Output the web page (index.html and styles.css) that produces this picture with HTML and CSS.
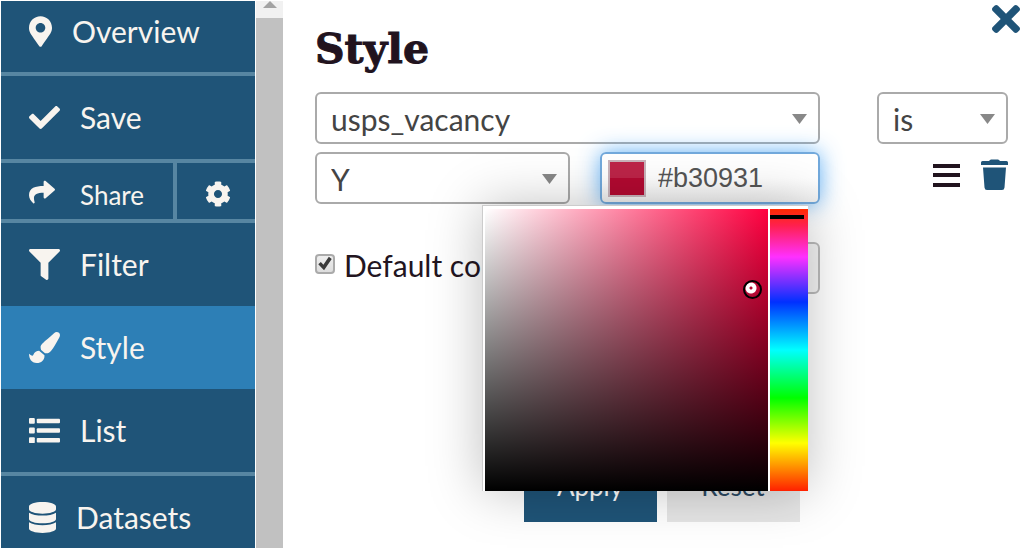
FILE: index.html
```html
<!DOCTYPE html>
<html lang="en">
<head>
<meta charset="utf-8">
<meta name="viewport" content="width=device-width, initial-scale=1">
<title>Style</title>
<link rel="stylesheet" href="styles.css">
</head>
<body>
<div class="app">
  <nav class="sidebar">
    <a class="nav-item first ruled" href="#overview">
      <svg class="icon icon-pin" viewBox="0 0 384 512"><path d="M172.268 501.67C26.97 291.031 0 269.413 0 192 0 85.961 85.961 0 192 0s192 85.961 192 192c0 77.413-26.97 99.031-172.268 309.67-9.535 13.774-29.93 13.773-39.464 0zM192 272c44.183 0 80-35.817 80-80s-35.817-80-80-80-80 35.817-80 80 35.817 80 80 80z"/></svg>
      <span>Overview</span>
    </a>
    <a class="nav-item ruled" href="#save">
      <svg class="icon" viewBox="0 0 512 512"><path d="M173.898 439.404l-166.4-166.4c-9.997-9.997-9.997-26.206 0-36.204l36.203-36.204c9.997-9.998 26.207-9.998 36.204 0L192 312.69 432.095 72.596c9.997-9.997 26.207-9.997 36.204 0l36.203 36.204c9.997 9.997 9.997 26.206 0 36.204l-294.4 294.401c-9.998 9.997-26.207 9.997-36.204-.001z"/></svg>
      <span>Save</span>
    </a>
    <div class="share-row ruled">
      <a class="share" href="#share">
        <svg class="icon-small" viewBox="0 0 512 512"><path d="M503.691 189.836L327.687 37.851C312.281 24.546 288 35.347 288 56.015v80.053C127.371 137.907 0 170.1 0 322.326c0 61.441 39.581 122.309 83.333 154.132 13.653 9.931 33.111-2.533 28.077-18.631C66.066 312.814 132.917 274.316 288 272.085V360c0 20.7 24.3 31.453 39.687 18.164l176.004-152c11.071-9.562 11.086-26.753 0-36.328z"/></svg>
        <span>Share</span>
      </a>
      <button class="settings" type="button" aria-label="Share settings">
        <svg class="icon-small" viewBox="0 0 512 512"><path d="M487.4 315.7l-42.6-24.6c4.3-23.2 4.3-47 0-70.2l42.6-24.6c4.9-2.8 7.1-8.6 5.5-14-11.1-35.6-30-67.8-54.7-94.6-3.8-4.1-10-5.1-14.8-2.3L380.8 110c-17.9-15.4-38.5-27.3-60.8-35.1V25.8c0-5.6-3.9-10.5-9.4-11.7-36.7-8.2-74.3-7.8-109.2 0-5.5 1.2-9.4 6.1-9.4 11.7V75c-22.2 7.9-42.8 19.8-60.8 35.1L88.7 85.5c-4.9-2.8-11-1.9-14.8 2.3-24.7 26.7-43.6 58.9-54.7 94.6-1.7 5.4.6 11.2 5.5 14L67.3 221c-4.3 23.2-4.3 47 0 70.2l-42.6 24.6c-4.9 2.8-7.1 8.6-5.5 14 11.1 35.6 30 67.8 54.7 94.6 3.8 4.1 10 5.1 14.8 2.3l42.6-24.6c17.9 15.4 38.5 27.3 60.8 35.1v49.2c0 5.6 3.9 10.5 9.4 11.7 36.7 8.2 74.3 7.8 109.2 0 5.5-1.2 9.4-6.1 9.4-11.7v-49.2c22.2-7.9 42.8-19.8 60.8-35.1l42.6 24.6c4.9 2.8 11 1.9 14.8-2.3 24.7-26.7 43.6-58.9 54.7-94.6 1.5-5.5-.7-11.3-5.6-14.1zM256 336c-44.1 0-80-35.9-80-80s35.9-80 80-80 80 35.9 80 80-35.9 80-80 80z"/></svg>
      </button>
    </div>
    <a class="nav-item" href="#filter">
      <svg class="icon" viewBox="0 0 512 512"><path d="M487.976 0H24.028C2.71 0-8.047 25.866 7.058 40.971L192 225.941V432c0 7.831 3.821 15.17 10.237 19.662l80 55.98C298.02 518.69 320 507.493 320 487.98V225.941l184.947-184.97C520.021 25.896 509.338 0 487.976 0z"/></svg>
      <span>Filter</span>
    </a>
    <a class="nav-item active" href="#style">
      <svg class="icon" viewBox="0 0 512 512"><path d="M167.02 309.34c-40.12 2.58-76.53 17.86-97.19 72.3-2.35 6.21-8 9.98-14.59 9.98-11.11 0-45.46-27.67-55.25-34.35C0 439.62 37.93 512 128 512c75.86 0 128-43.77 128-120.19 0-3.11-.65-6.08-.97-9.13l-88.01-73.34zM457.89 0c-15.16 0-29.37 6.71-40.21 16.45C213.27 199.05 192 203.34 192 257.09c0 13.7 3.25 26.76 8.73 38.7l63.82 53.18c7.21 1.8 14.64 3.03 22.39 3.03 62.11 0 98.11-45.47 211.16-256.46 7.38-14.35 13.9-29.85 13.9-45.99C512 20.64 486 0 457.89 0z"/></svg>
      <span>Style</span>
    </a>
    <a class="nav-item ruled" href="#list">
      <svg class="icon" viewBox="0 0 512 512"><rect x="0" y="48" width="96" height="96" rx="16"/><rect x="0" y="208" width="96" height="96" rx="16"/><rect x="0" y="368" width="96" height="96" rx="16"/><rect x="128" y="60" width="384" height="76" rx="16"/><rect x="128" y="218" width="384" height="76" rx="16"/><rect x="128" y="378" width="384" height="76" rx="16"/></svg>
      <span>List</span>
    </a>
    <a class="nav-item" href="#datasets">
      <svg class="icon icon-data" viewBox="0 0 448 512"><path d="M448 73.143v45.714C448 159.143 347.667 192 224 192S0 159.143 0 118.857V73.143C0 32.857 100.333 0 224 0s224 32.857 224 73.143zM448 176v102.857C448 319.143 347.667 352 224 352S0 319.143 0 278.857V176c48.125 33.143 136.208 48.572 224 48.572S399.874 209.143 448 176zm0 160v102.857C448 479.143 347.667 512 224 512S0 479.143 0 438.857V336c48.125 33.143 136.208 48.572 224 48.572S399.874 369.143 448 336z"/></svg>
      <span>Datasets</span>
    </a>
  </nav>
  <div class="scrollbar" aria-hidden="true">
    <div class="scroll-up"><svg class="scroll-arrow" viewBox="0 0 14 7"><path d="M0 7L7 0l7 7z"/></svg></div>
    <div class="scroll-thumb"></div>
  </div>
  <main class="panel">
    <button class="close" type="button" aria-label="Close">
      <svg class="close-icon" viewBox="0 80 352 352"><path d="M242.72 256l100.07-100.07c12.28-12.28 12.28-32.19 0-44.48l-22.24-22.24c-12.28-12.28-32.19-12.28-44.48 0L176 189.28 75.93 89.21c-12.28-12.28-32.19-12.28-44.48 0L9.21 111.45c-12.28 12.28-12.28 32.19 0 44.48L109.28 256 9.21 356.07c-12.28 12.28-12.28 32.19 0 44.48l22.24 22.24c12.28 12.28 32.2 12.28 44.48 0L176 322.72l100.07 100.07c12.28 12.28 32.2 12.28 44.48 0l22.24-22.24c12.28-12.28 12.28-32.19 0-44.48L242.72 256z"/></svg>
    </button>
    <h1 class="title">Style</h1>
    <form class="rules">
      <div class="select-box">
        <select class="field" aria-label="Column"><option>usps_vacancy</option></select>
        <svg class="caret" viewBox="0 0 15 10"><path d="M0 0h15L7.500 10z"/></svg>
      </div>
      <div class="select-box">
        <select class="field" aria-label="Operator"><option>is</option></select>
        <svg class="caret" viewBox="0 0 15 10"><path d="M0 0h15L7.500 10z"/></svg>
      </div>
      <div class="value-row">
        <div class="select-box">
          <select class="field" aria-label="Value"><option>Y</option></select>
          <svg class="caret" viewBox="0 0 15 10"><path d="M0 0h15L7.500 10z"/></svg>
        </div>
        <div class="color-box focused">
          <span class="swatch"></span>
          <input class="color-text" type="text" value="#b30931" aria-label="Color">
          <div class="picker">
            <div class="shade"><span class="handle"></span></div>
            <input class="hue" type="range" min="0" max="100" value="2" aria-label="Hue">
          </div>
        </div>
      </div>
      <div class="row-tools">
        <button class="tool" type="button" aria-label="Reorder"><svg class="tool-icon" viewBox="0 0 27 32"><path class="ink" d="M0 5h27v4H0zM0 14h27v4H0zM0 24h27v4H0z"/></svg></button>
        <button class="tool" type="button" aria-label="Delete"><svg class="tool-icon" viewBox="0 0 27 32"><path d="M1.500 2H8q1-1.500 2-1.500h7q1 0 2 1.500h6.500Q27 2 27 3.500V6H0V3.500Q0 2 1.500 2zM2 8.500h23l-1.500 20Q23.300 31 21 31H6Q3.700 31 3.500 28.500z"/></svg></button>
      </div>
      <div class="default-row">
        <label class="check"><input class="check-input" type="checkbox" checked>Default color</label>
        <div class="color-box muted"><input class="color-text" type="text" aria-label="Default color value"></div>
      </div>
    </form>
    <div class="actions">
      <button class="btn primary" type="button">Apply</button>
      <button class="btn" type="button">Reset</button>
    </div>
  </main>
</div>
</body>
</html>
```
FILE: styles.css
```css
* { box-sizing: border-box; }
body {
  margin: 0;
  background: #fff;
  color: #23151f;
  font-family: Lato, "Open Sans", sans-serif;
  font-size: 30px;
}
button { font: inherit; border: 0; padding: 0; background: none; cursor: pointer; }
svg { display: block; flex: none; fill: currentColor; }

.app { display: flex; height: 100vh; padding: 1px 0 1px 1px; overflow: hidden; }

.sidebar { flex: 0 0 254px; background: #1f5478; color: #f8f4ef; overflow: hidden; }
.nav-item {
  display: flex;
  align-items: center;
  gap: 20px;
  height: 83px;
  padding: 0 0 1px 28px;
  color: inherit;
  text-decoration: none;
}
.ruled { box-sizing: content-box; border-bottom: 4px solid #5786a2; }
.nav-item.ruled { height: 82px; }
.nav-item.first { height: 60px; padding-bottom: 11px; }
.active { background: #2d7fb6; }
.icon { width: 31px; height: 31px; }
.icon-pin { width: 23px; }
.icon-data { width: 27px; }
.icon-small { width: 26px; height: 26px; }
.share-row { display: flex; height: 56px; font-size: 26px; line-height: 31px; }
.share {
  flex: 1;
  display: flex;
  align-items: baseline;
  gap: 25px;
  padding: 16px 0 0 28px;
  color: inherit;
  text-decoration: none;
}
.settings {
  flex: 0 0 82px;
  display: grid;
  place-items: center;
  padding: 6px 0 0 4px;
  border-left: 4px solid #5786a2;
  color: inherit;
}

.scrollbar { flex: 0 0 28px; display: flex; flex-direction: column; padding-left: 1px; }
.scroll-up { height: 17px; background: #f1f1f1; color: #a3a3a3; }
.scroll-arrow { width: 14px; height: 7px; margin: 0 auto; }
.scroll-thumb { flex: 1; background: #c1c1c1; }

.panel { position: relative; flex: 1; min-width: 0; padding: 20px 27px 0 32px; }
.close { position: absolute; top: 4px; right: 15px; color: #1f5478; }
.close-icon { width: 28px; height: 28px; }
.title {
  margin: 0 0 15px;
  font: bold 41px/56px "DejaVu Serif", serif;
  color: #21131e;
  -webkit-text-stroke: 1px #21131e;
}

.rules { display: grid; grid-template-columns: 505fr 131fr; gap: 8px 57px; }
.select-box { position: relative; min-width: 0; }
.field {
  display: block;
  width: 100%;
  height: 52px;
  padding: 2px 40px 0 14px;
  border: 2px solid #aaa;
  border-radius: 6px;
  background: #fff;
  color: #444;
  font: inherit;
  line-height: 36px;
  appearance: none;
}
.caret {
  position: absolute;
  right: 13px;
  top: 22px;
  width: 15px;
  height: 10px;
  color: #888;
  pointer-events: none;
}
.value-row { display: grid; grid-template-columns: 255fr 220fr; gap: 30px; }
.color-box {
  position: relative;
  display: flex;
  align-items: center;
  gap: 12px;
  height: 52px;
  padding: 0 6px;
  border: 2px solid #aaa;
  border-radius: 6px;
  background: #fff;
}
.focused {
  z-index: 2;
  border-color: #72a9dc;
  background: linear-gradient(#fff 50%, #f1f1f1);
  box-shadow: 0 0 22px rgba(72, 165, 245, .85);
}
.muted { background: #f4f4f4; border-color: #bbb; }
.swatch {
  flex: 0 0 38px;
  height: 37px;
  border: 2px solid #c9b4bb;
  background: linear-gradient(#bd2448 50%, #b30931 50%);
}
.color-text {
  flex: 1;
  min-width: 0;
  width: 100%;
  padding: 0;
  border: 0;
  outline: 0;
  background: none;
  color: #555;
  font: 27px "Liberation Sans", Arial, sans-serif;
}

.picker {
  position: absolute;
  top: 51px;
  right: 10px;
  display: flex;
  gap: 2px;
  width: 326px;
  height: 286px;
  padding: 3px 0 0 2px;
  border: solid #ccc;
  border-width: 1px 0 0 1px;
  background: #fff;
  box-shadow: 0 0 50px rgba(0, 0, 0, .25);
}
.shade {
  position: relative;
  flex: 1;
  background: linear-gradient(to top, #000, transparent), linear-gradient(to right, #fff, #ff0040);
}
.handle {
  position: absolute;
  left: 258px;
  top: 71px;
  width: 19px;
  height: 19px;
  border: 2px solid #000;
  border-radius: 50%;
  background: radial-gradient(circle at 6px 6px, #b30931 1px, #fff 2px, #fff 5px, transparent 6px);
}
.hue {
  flex: 0 0 38px;
  width: 38px;
  height: 282px;
  margin: 0;
  writing-mode: vertical-lr;
  appearance: none;
  background: linear-gradient(#ff2a00, #ff2050 6%, #ff30ff 17%, #0030ff 33%, #00ffff 50%, #00ff00 67%, #ffff00 83%, #ff2000);
}
.hue::-webkit-slider-thumb { appearance: none; width: 34px; height: 4px; margin-right: 4px; background: #000; }

.row-tools { display: flex; justify-content: flex-end; gap: 21px; padding-top: 7px; }
.tool { align-self: flex-start; color: #1f5478; }
.tool-icon { width: 27px; height: 32px; }
.ink { fill: #21131e; }

.default-row {
  display: grid;
  grid-template-columns: 255fr 220fr;
  align-items: center;
  gap: 30px;
  margin-top: 30px;
}
.check { display: flex; align-items: center; gap: 9px; padding-bottom: 6px; white-space: nowrap; }
.check-input {
  flex: none;
  width: 20px;
  height: 20px;
  margin: 0 0 3px;
  border: 2px solid #aaa;
  border-radius: 4px;
  background: linear-gradient(#eee, #ddd);
  appearance: none;
}
.check-input:checked::before {
  content: "";
  display: block;
  width: 16px;
  height: 16px;
  background: #3a3a3a;
  clip-path: polygon(8% 54%, 24% 40%, 40% 58%, 74% 8%, 92% 22%, 44% 92%);
}

.actions { display: flex; justify-content: center; gap: 10px; margin-top: 160px; }
.btn {
  width: 133px;
  height: 68px;
  padding-bottom: 5px;
  background: #e6e6e6;
  color: #2c4a63;
  font-size: 26px;
}
.primary { background: #1f5478; color: #fff; }
```
